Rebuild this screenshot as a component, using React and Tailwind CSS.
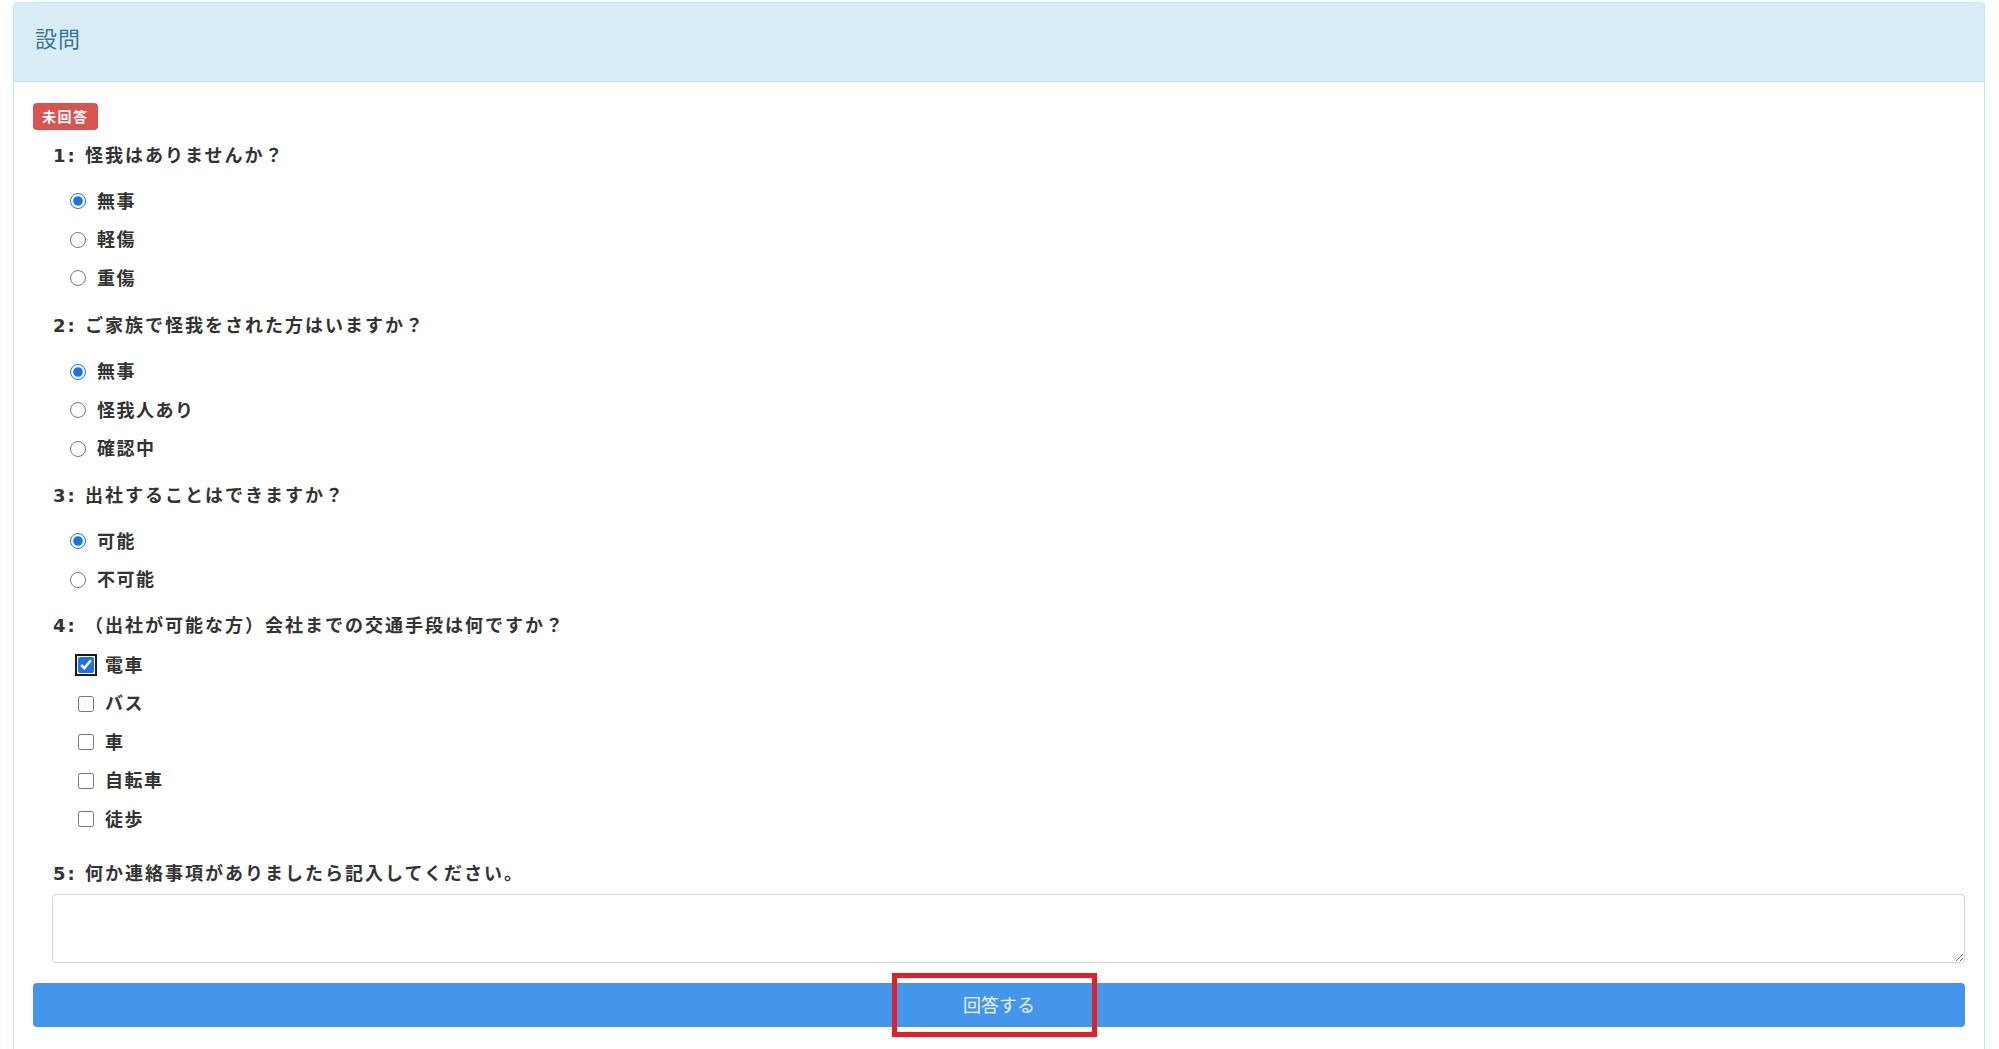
import React from "react";

const font = "font-['DejaVu_Sans','Noto_Sans_CJK_JP',sans-serif]";

function QLabel({ children }) {
  return (
    <div className="h-[24px] flex items-center pl-[20px] text-[18px] font-bold tracking-[2px] text-[#333]">
      {children}
    </div>
  );
}

function Radio({ label, checked, name }) {
  return (
    <label className="h-[38.5px] flex items-center pl-[37px] gap-[11px] text-[18px] font-bold tracking-[1.5px] text-[#333]">
      <input
        type="radio"
        name={name}
        defaultChecked={checked}
        className="m-0 w-[16px] h-[16px] accent-[#1a73e8]"
      />
      <span>{label}</span>
    </label>
  );
}

function Check({ label, checked, focus }) {
  return (
    <label className="h-[38.5px] flex items-center pl-[45px] gap-[11px] text-[18px] font-bold tracking-[1.5px] text-[#333]">
      <input
        type="checkbox"
        defaultChecked={checked}
        className={
          "m-0 w-[16px] h-[16px] accent-[#1a73e8] " +
          (focus ? "outline-2 outline-[#1a1a1a] outline-offset-[1px] rounded-[3px]" : "")
        }
      />
      <span>{label}</span>
    </label>
  );
}

export default function App() {
  return (
    <div className={`${font} bg-white min-h-[1049px] pt-[2px] pl-[13px] pr-[14px]`}>
      <div className="border border-[#bce8f1] rounded-t-[4px] pb-[60px]">
        <div className="h-[79px] bg-[#d9edf7] border-b border-[#bce8f1] flex items-center pl-[21px] pb-[9px] text-[22px] tracking-[1px] text-[#3b7494] font-['Noto_Sans_CJK_JP',sans-serif]">
          設問
        </div>
        <div className="px-[19px] pt-[21px]">
          <div className="flex">
            <span className="h-[27px] px-[9px] flex items-center rounded-[4px] bg-[#d9534f] text-white text-[14px] font-bold tracking-[1.5px] font-['Noto_Sans_CJK_JP',sans-serif]">
              未回答
            </span>
          </div>

          <div className="mt-[13px]">
            <QLabel>1: 怪我はありませんか？</QLabel>
            <div className="mt-[15px]">
              <Radio name="q1" label="無事" checked />
              <Radio name="q1" label="軽傷" />
              <Radio name="q1" label="重傷" />
            </div>
          </div>

          <div className="mt-[16px]">
            <QLabel>2: ご家族で怪我をされた方はいますか？</QLabel>
            <div className="mt-[15px]">
              <Radio name="q2" label="無事" checked />
              <Radio name="q2" label="怪我人あり" />
              <Radio name="q2" label="確認中" />
            </div>
          </div>

          <div className="mt-[15px]">
            <QLabel>3: 出社することはできますか？</QLabel>
            <div className="mt-[15px]">
              <Radio name="q3" label="可能" checked />
              <Radio name="q3" label="不可能" />
            </div>
          </div>

          <div className="mt-[14px]">
            <QLabel>4: （出社が可能な方）会社までの交通手段は何ですか？</QLabel>
            <div className="mt-[9px]">
              <Check label="電車" checked focus />
              <Check label="バス" />
              <Check label="車" />
              <Check label="自転車" />
              <Check label="徒歩" />
            </div>
          </div>

          <div className="mt-[23px]">
            <QLabel>5: 何か連絡事項がありましたら記入してください。</QLabel>
            <div className="pl-[19px] mt-[8px]">
              <textarea className="block w-full h-[69px] border border-[#d4d4d4] rounded-[4px] bg-white outline-none" />
            </div>
          </div>

          <div className="relative mt-[20px]">
            <button className="w-full h-[44px] rounded-[4px] bg-[#4496ec] text-[#eef4fc] text-[18px] flex items-center justify-center font-['Noto_Sans_CJK_JP',sans-serif]">
              回答する
            </button>
            <div className="absolute left-[859px] top-[-10px] w-[205px] h-[64px] border-[5px] border-[#e31e24] pointer-events-none" />
          </div>
        </div>
      </div>
    </div>
  );
}
